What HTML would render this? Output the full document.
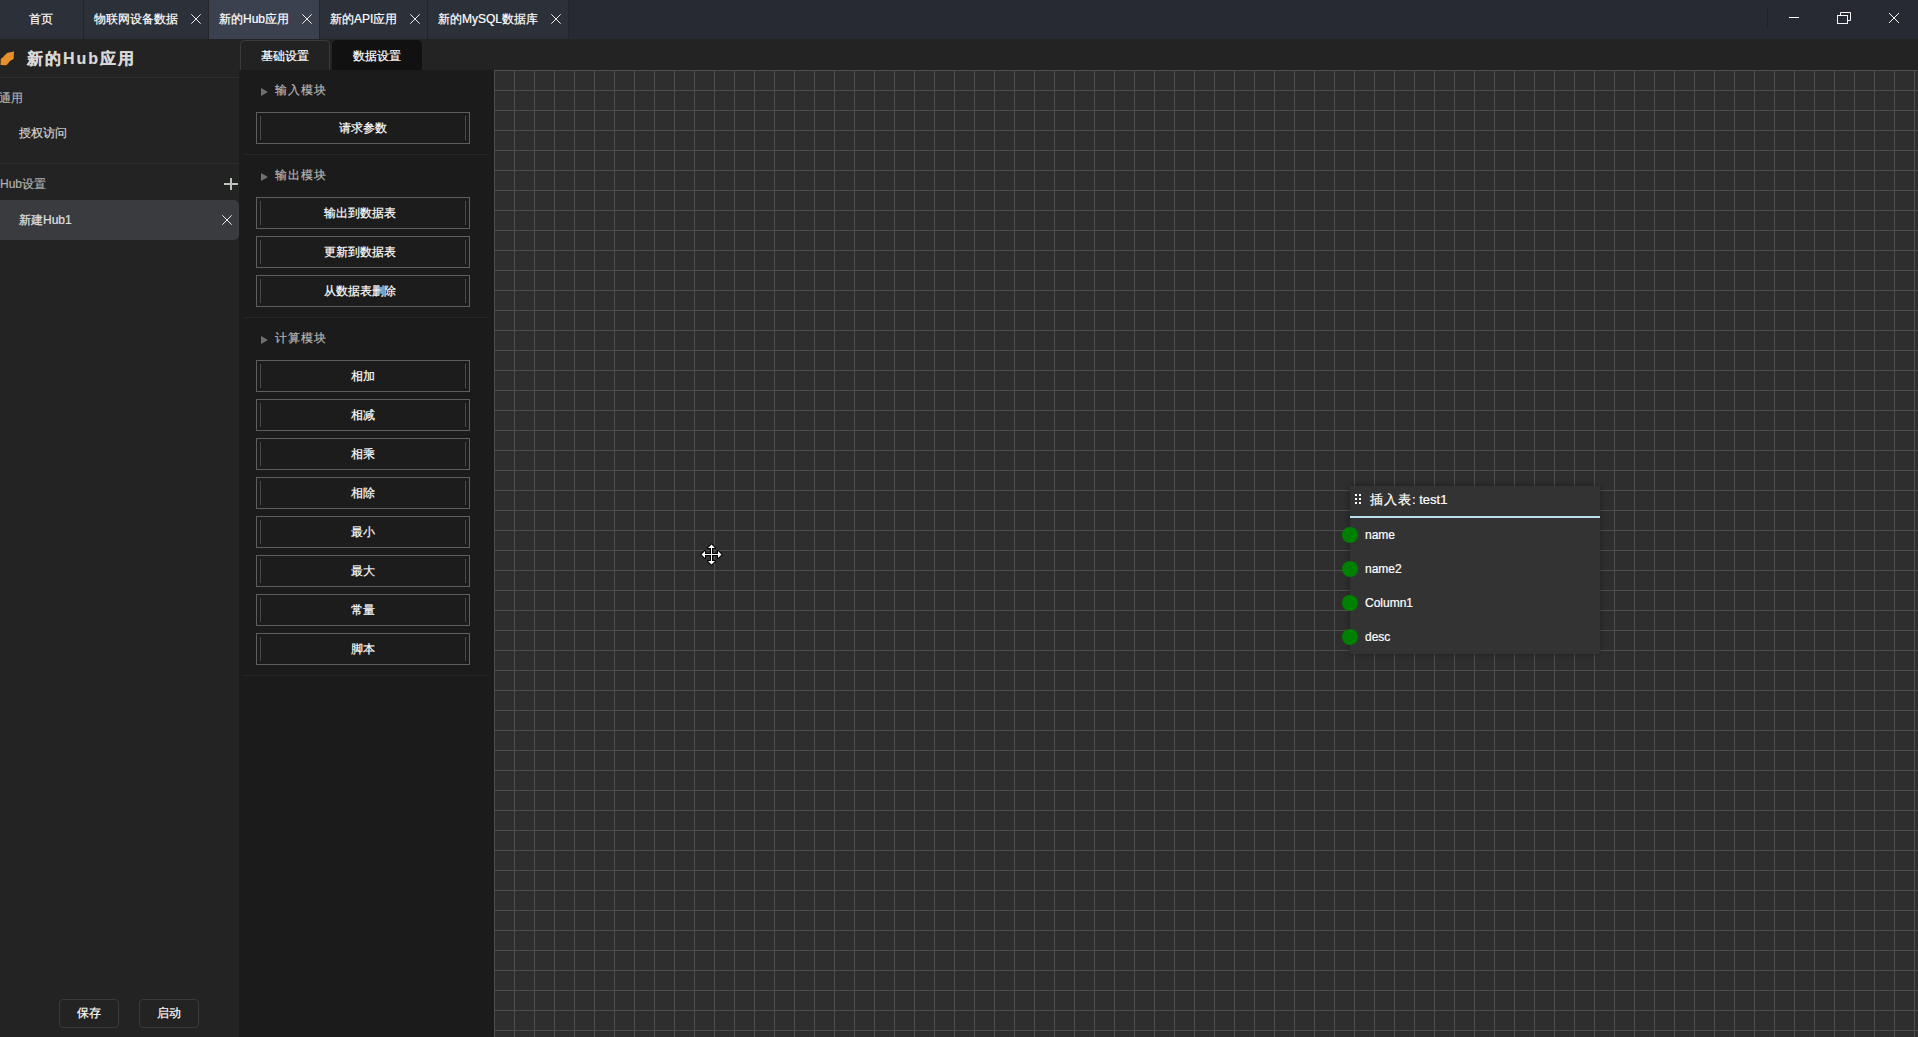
<!DOCTYPE html>
<html><head><meta charset="utf-8">
<style>
*{margin:0;padding:0;box-sizing:border-box}
html,body{width:1918px;height:1037px;overflow:hidden;background:#232323;font-family:"Liberation Sans",sans-serif;font-size:12px;color:#fff;-webkit-text-stroke-width:0.2px}
.a{position:absolute}
#titlebar{left:0;top:0;width:1918px;height:39px;background:#272a33}
.tab{position:absolute;top:0;height:39px;background:#2c3039;color:#fff;font-size:12px;line-height:39px}
.tab.act{background:#3c4150}
.sep{position:absolute;top:0;width:1px;height:39px;background:#252428}
.tab .t{position:absolute;top:0;white-space:nowrap}
.xic{position:absolute;width:11px;height:11px}
#left{left:0;top:39px;width:239px;height:998px;background:#232323}
#mid{left:239px;top:70px;width:255px;height:967px;background:#1b1b1b}
#grid{left:494px;top:70px;width:1424px;height:967px;background-color:#2e2e2e;
 background-image:linear-gradient(to right,#4e4e50 1px,transparent 1px),linear-gradient(to bottom,#4e4e50 1px,transparent 1px);
 background-size:20px 20px}
.btn{position:absolute;left:256px;width:214px;height:32px;border:1px solid #5e5e5e;background:#1c1c1c;color:#fff;text-align:center;line-height:30px;font-size:12px}
.btn:before,.btn:after{content:"";position:absolute;top:3px;width:1px;height:24px;background:#484848}
.btn:before{left:3px}
.btn:after{right:3px}
.sec{position:absolute;left:275px;color:#b4b4b4;font-size:12px;letter-spacing:1px;white-space:nowrap}
.tri{position:absolute;left:261px;width:0;height:0;border-top:4px solid transparent;border-bottom:4px solid transparent;border-left:7px solid #707070}
.hsep{position:absolute;left:244px;width:245px;height:1px;background:#262626}
.node-row{position:absolute;left:1365px;color:#fff;font-size:12px;white-space:nowrap}
.dot{position:absolute;left:1342px;width:16px;height:16px;border-radius:50%;background:#008000}
</style></head>
<body>
<div id="titlebar" class="a">
  <div class="tab" style="left:0;width:83px"><span class="t" style="left:29px">首页</span></div>
  <div class="sep" style="left:83px"></div>
  <div class="tab" style="left:84px;width:124px"><span class="t" style="left:10px">物联网设备数据</span>
    <svg class="xic" style="left:107px;top:14px" viewBox="0 0 11 11"><path d="M0.3 0.3L9.7 9.7M9.7 0.3L0.3 9.7" stroke="#f4f4f4" stroke-width="0.95"/></svg></div>
  <div class="sep" style="left:208px"></div>
  <div class="tab act" style="left:209px;width:110px"><span class="t" style="left:10px">新的Hub应用</span>
    <svg class="xic" style="left:93px;top:14px" viewBox="0 0 11 11"><path d="M0.3 0.3L9.7 9.7M9.7 0.3L0.3 9.7" stroke="#f4f4f4" stroke-width="0.95"/></svg></div>
  <div class="sep" style="left:319px"></div>
  <div class="tab" style="left:320px;width:107px"><span class="t" style="left:10px">新的API应用</span>
    <svg class="xic" style="left:90px;top:14px" viewBox="0 0 11 11"><path d="M0.3 0.3L9.7 9.7M9.7 0.3L0.3 9.7" stroke="#f4f4f4" stroke-width="0.95"/></svg></div>
  <div class="sep" style="left:427px"></div>
  <div class="tab" style="left:428px;width:140px"><span class="t" style="left:10px">新的MySQL数据库</span>
    <svg class="xic" style="left:123px;top:14px" viewBox="0 0 11 11"><path d="M0.3 0.3L9.7 9.7M9.7 0.3L0.3 9.7" stroke="#f4f4f4" stroke-width="0.95"/></svg></div>
  <div class="sep" style="left:568px"></div>
  <div class="a" style="left:1767px;top:9px;width:1px;height:20px;background:#1f2128"></div>
  <div class="a" style="left:1789px;top:17px;width:10px;height:1px;background:#fff"></div>
  <svg class="a" style="left:1836px;top:11px" width="16" height="14" viewBox="0 0 16 14"><path d="M4.5 4.5V1.5H14.5V9.5H11.5" fill="none" stroke="#f4f4f4" stroke-width="1"/><rect x="1.5" y="4.5" width="10" height="8" fill="none" stroke="#f4f4f4" stroke-width="1"/></svg>
  <svg class="a" style="left:1888px;top:12px" width="12" height="12" viewBox="0 0 12 12"><path d="M1 1L11 11M11 1L1 11" stroke="#fff" stroke-width="1"/></svg>
</div>

<div id="left" class="a">
  <svg class="a" style="left:0;top:12px" width="15" height="15" viewBox="0 0 15 15"><path d="M0.5 14L0.8 8L3.2 6L5 4L7.5 1.8L12 1L14 0.3L13.6 8L10 10L8 12.5L6.5 14.3Z" fill="#e8912a"/></svg>
  <div class="a" style="left:27px;top:10px;font-size:16px;font-weight:bold;color:#d8d8d8;letter-spacing:2px;white-space:nowrap;line-height:20px">新的Hub应用</div>
  <div class="a" style="left:0;top:38px;width:239px;height:1px;background:#2e2e2e"></div>
  <div class="a" style="left:-1px;top:51px;color:#b0b0b0;white-space:nowrap;line-height:16px">通用</div>
  <div class="a" style="left:19px;top:86px;color:#d4d4d4;white-space:nowrap;line-height:16px">授权访问</div>
  <div class="a" style="left:0;top:124px;width:239px;height:1px;background:#2e2e2e"></div>
  <div class="a" style="left:0;top:137px;color:#b0b0b0;white-space:nowrap;line-height:16px">Hub设置</div>
  <svg class="a" style="left:224px;top:139px" width="14" height="12" viewBox="0 0 14 12"><path d="M7 0V12M0 6H14" stroke="#bcc4bc" stroke-width="2"/></svg>
  <div class="a" style="left:0;top:161px;width:239px;height:40px;background:#3a3b3f;border-radius:0 5px 5px 0"></div>
  <div class="a" style="left:19px;top:173px;color:#e0e0e0;white-space:nowrap;line-height:16px">新建Hub1</div>
  <svg class="a" style="left:222px;top:176px" width="11" height="11" viewBox="0 0 11 11"><path d="M0.3 0.3L9.7 9.7M9.7 0.3L0.3 9.7" stroke="#f4f4f4" stroke-width="0.95"/></svg>
  <div class="a" style="left:59px;top:960px;width:60px;height:29px;border:1px solid #3a3a3a;border-radius:4px;text-align:center;line-height:27px;color:#fff">保存</div>
  <div class="a" style="left:139px;top:960px;width:60px;height:29px;border:1px solid #3a3a3a;border-radius:4px;text-align:center;line-height:27px;color:#fff">启动</div>
</div>
<div class="a" style="left:240px;top:40px;width:90px;height:30px;border:1px solid #3a3a3a;border-bottom:none;border-radius:5px 5px 0 0;background:#222;text-align:center;line-height:30px;color:#fff">基础设置</div>
<div class="a" style="left:332px;top:40px;width:90px;height:30px;border-radius:5px 5px 0 0;background:#111;text-align:center;line-height:32px;color:#fff">数据设置</div>
<div id="mid" class="a"></div>
<div class="tri" style="top:88px"></div><div class="sec" style="top:82px;line-height:16px">输入模块</div>
<div class="btn" style="top:112px">请求参数</div>
<div class="hsep" style="top:154px"></div>
<div class="tri" style="top:173px"></div><div class="sec" style="top:167px;line-height:16px">输出模块</div>
<div class="btn" style="top:197px;padding-right:6px">输出到数据表</div>
<div class="btn" style="top:236px;padding-right:6px">更新到数据表</div>
<div class="btn" style="top:275px;padding-right:6px">从数据表删除</div>
<div class="hsep" style="top:317px"></div>
<div class="tri" style="top:336px"></div><div class="sec" style="top:330px;line-height:16px">计算模块</div>
<div class="btn" style="top:360px">相加</div>
<div class="btn" style="top:399px">相减</div>
<div class="btn" style="top:438px">相乘</div>
<div class="btn" style="top:477px">相除</div>
<div class="btn" style="top:516px">最小</div>
<div class="btn" style="top:555px">最大</div>
<div class="btn" style="top:594px">常量</div>
<div class="btn" style="top:633px">脚本</div>
<div class="hsep" style="top:675px"></div>
<div id="grid" class="a"></div>
<div class="a" style="left:1350px;top:486px;width:250px;height:168px;background:#333;box-shadow:0 0 6px rgba(0,0,0,0.35)"></div>
<div class="a" style="left:1350px;top:516px;width:250px;height:2px;background:#b8def0"></div>
<svg class="a" style="left:1354px;top:494px" width="8" height="11" viewBox="0 0 8 11"><g fill="#fff"><rect x="1" y="0" width="2" height="2"/><rect x="5" y="0" width="2" height="2"/><rect x="1" y="4" width="2" height="2"/><rect x="5" y="4" width="2" height="2"/><rect x="1" y="8" width="2" height="2"/><rect x="5" y="8" width="2" height="2"/></g></svg>
<div class="a" style="left:1370px;top:492px;font-size:13px;line-height:16px;color:#fff;white-space:nowrap"><span style="letter-spacing:1px">插入表</span>:&nbsp;test1</div>
<div class="dot" style="top:527px"></div><div class="node-row" style="top:528px;line-height:14px">name</div>
<div class="dot" style="top:561px"></div><div class="node-row" style="top:562px;line-height:14px">name2</div>
<div class="dot" style="top:595px"></div><div class="node-row" style="top:596px;line-height:14px">Column1</div>
<div class="dot" style="top:629px"></div><div class="node-row" style="top:630px;line-height:14px">desc</div>
<svg class="a" style="left:699px;top:542px" width="25" height="25" viewBox="0 0 25 25"><path d="M12.5 2.5L16 6L13 6L13 12L19 12L19 9L22.5 12.5L19 16L19 13L13 13L13 19L16 19L12.5 22.5L9 19L12 19L12 13L6 13L6 16L2.5 12.5L6 9L6 12L12 12L12 6L9 6Z" fill="#000" stroke="#000" stroke-width="2" stroke-linejoin="round"/><path d="M12.5 2.5L16 6L13 6L13 12L19 12L19 9L22.5 12.5L19 16L19 13L13 13L13 19L16 19L12.5 22.5L9 19L12 19L12 13L6 13L6 16L2.5 12.5L6 9L6 12L12 12L12 6L9 6Z" fill="#fff"/></svg>
</body></html>
